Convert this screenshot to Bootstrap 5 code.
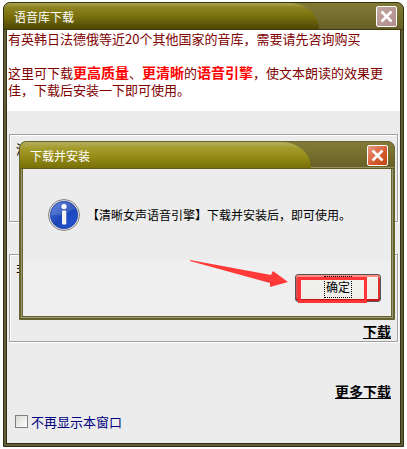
<!DOCTYPE html>
<html lang="zh-CN">
<head>
<meta charset="utf-8">
<meta name="viewport" content="width=device-width, initial-scale=1">
<title>语音库下载</title>
<link href="https://cdn.jsdelivr.net/npm/bootstrap@5.3.0/dist/css/bootstrap.min.css" rel="stylesheet">
<style>
body { background: #fff; font-family: "Noto Sans CJK SC", sans-serif; font-size: 13px; line-height: 17px; color: #000; }
.app-window { margin: 2px 3px; min-height: calc(100vh - 4px); border: 1px solid #34310f; border-radius: 7px 7px 0 0; background: #5f5d3b; padding: 0 3px 3px; box-shadow: inset 0 0 0 2px #5f5d3b, inset 0 0 0 3px #34310f; }
.title-bar { height: 27px; margin: 0 -3px; background: linear-gradient(#827b38, #766e2d 50%, #665f27); border-bottom: 1px solid #3c3910; border-radius: 6px 6px 0 0; color: #fff; font-size: 12px; overflow: hidden; }
.title-tab { width: 315px; padding-left: 10px; border-radius: 6px 30px 0 0 / 6px 27px 0 0; background: linear-gradient(#aaa454, #8d8220 18%, #7a710d 50%, #4d4705); }
.win-close { width: 21px; height: 21px; margin: 3px 6px 0 0; padding: 0; border: 1px solid #fff; border-radius: 2px; background: linear-gradient(135deg, #c2a6a0, #b18b8b); line-height: 0; }
.win-close svg { width: 19px; height: 19px; }
.notice { height: 81px; background: #fff; color: #800000; padding: 0 4px 0 1px; }
.notice p { margin: 0 0 17px; }
.notice strong { color: #f00; font-size: 14px; }
.client { background: #ececec; padding-top: 23px; }
.voice-group { height: 88px; margin: 0 2px 32px; border: 1px solid #a0a0a0; box-shadow: inset 1px 1px #fff, 1px 1px #fff; padding: 5px 6px 1px 6px; }
.dl { color: #000; font-size: 14px; font-weight: 700; text-decoration: underline; text-underline-offset: 1px; }
.more { padding: 9px 9px 0 0; }
.opt { padding: 13px 8px; color: #000080; gap: 3px; }
.opt input { appearance: none; width: 13px; height: 13px; margin: 0; border: 1px solid #808080; background: linear-gradient(135deg, #d8d8d4, #fff); }
.msg-box { left: 15px; right: 8px; top: 138px; border: 1px solid #67632d; border-radius: 7px 7px 0 0; background: #999778; padding: 0 3px 3px; box-shadow: inset 0 0 0 1px #67632d, inset 0 0 0 2px #999778, inset 0 0 0 3px #67632d; }
.msg-box .title-bar { border-bottom-color: #5f5a20; box-shadow: inset 0 -1px #979263; }
.msg-box .title-tab { width: 291px; background: linear-gradient(#b5af60, #a39b2b 25%, #968c18 55%, #787008); }
.msg-box .win-close { background: linear-gradient(135deg, #e89a80, #d75d33 55%, #c04310); }
.msg-body { height: 91px; background: #ececec; padding: 0 0 0 24px; gap: 6px; font-size: 12px; }
.info-icon { width: 34px; height: 34px; }
.msg-foot { height: 56px; background: #efefef; padding: 14px 10px 0 0; }
.ok-wrap { width: 86px; }
.ok-btn { height: 28px; padding: 0 4px 2px; border: 1px solid #555; border-radius: 3px; background: linear-gradient(#f2f2ee, #efefe8) padding-box; box-shadow: inset 0 2px #ff8d85, inset 0 -2px #c71518, inset 2px 0 #e54a4a, inset -2px 0 #dd3031; font-size: 12px; color: #000; }
.ok-btn span { display: inline-block; border: 1px dotted #000; padding: 1px 1px 2px; line-height: 17px; }
.mark-box { left: 3px; top: 3px; width: 69px; height: 26px; border: 3px solid #ff3436; pointer-events: none; }
.mark-arrow { right: 95px; bottom: 28px; width: 110px; height: 32px; pointer-events: none; }
</style>
<script src="https://cdn.jsdelivr.net/npm/bootstrap@5.3.0/dist/js/bootstrap.bundle.min.js"></script>
</head>
<body class="overflow-hidden">
<main class="app-window position-relative d-flex flex-column">
  <header class="title-bar d-flex justify-content-between">
    <div class="title-tab d-flex align-items-center">语音库下载</div>
    <button type="button" class="win-close" aria-label="关闭"><svg viewBox="0 0 19 19" aria-hidden="true"><path d="M4.500 4.500l10 10M14.500 4.500l-10 10" stroke="#fff" stroke-width="2.600"/></svg></button>
  </header>
  <section class="notice">
    <p>有英韩日法德俄等近20个其他国家的音库，需要请先咨询购买</p>
    <p class="mb-0">这里可下载<strong>更高质量</strong>、<strong>更清晰</strong>的<strong>语音引擎</strong>，使文本朗读的效果更佳，下载后安装一下即可使用。</p>
  </section>
  <section class="client flex-grow-1 d-flex flex-column">
    <div class="voice-group">清</div>
    <div class="voice-group mb-0 d-flex flex-column justify-content-between"><span>非</span><a href="#" class="dl align-self-end">下载</a></div>
    <div class="more text-end mt-auto"><a href="#" class="dl">更多下载</a></div>
    <label class="opt d-flex align-items-center"><input type="checkbox">不再显示本窗口</label>
  </section>

  <section class="msg-box position-absolute" role="dialog" aria-labelledby="msgTitle">
    <header class="title-bar d-flex justify-content-between">
      <div class="title-tab d-flex align-items-center" id="msgTitle">下载并安装</div>
      <button type="button" class="win-close" aria-label="关闭"><svg viewBox="0 0 19 19" aria-hidden="true"><path d="M4.500 4.500l10 10M14.500 4.500l-10 10" stroke="#fff" stroke-width="2.600"/></svg></button>
    </header>
    <div class="msg-body d-flex align-items-center">
      <svg class="info-icon flex-shrink-0" viewBox="0 0 34 34" aria-hidden="true">
        <defs><linearGradient id="blue" x1="0" y1="0" x2="1" y2="1"><stop offset="0" stop-color="#4f79dd"/><stop offset=".5" stop-color="#1c46b8"/><stop offset="1" stop-color="#2456dc"/></linearGradient></defs>
        <circle cx="17" cy="17" r="15.5" fill="#e4e4e4" stroke="#858585"/>
        <circle cx="17" cy="17" r="13.7" fill="url(#blue)" stroke="#1c389a" stroke-width=".7"/>
        <path d="M4 17A13 13 0 0 1 28 10Q18 18 4 17Z" fill="#fff" opacity=".13"/>
        <circle cx="17" cy="8.500" r="2.600" fill="#fff"/><rect x="15" y="12.500" width="4.300" height="14" rx="1" fill="#f3f3f3"/>
      </svg>
      <span>【清晰女声语音引擎】下载并安装后，即可使用。</span>
    </div>
    <div class="msg-foot d-flex justify-content-end">
      <div class="ok-wrap position-relative">
        <button type="button" class="ok-btn w-100 d-flex align-items-center justify-content-center"><span>确定</span></button>
        <div class="mark-box position-absolute"></div>
      </div>
    </div>
    <svg class="mark-arrow position-absolute" viewBox="0 0 110 32" aria-hidden="true"><path d="M1 1L82 16L84 12L99 23L81 28L81 24L1 2Z" fill="#ff3a38"/></svg>
  </section>
</main>
</body>
</html>
